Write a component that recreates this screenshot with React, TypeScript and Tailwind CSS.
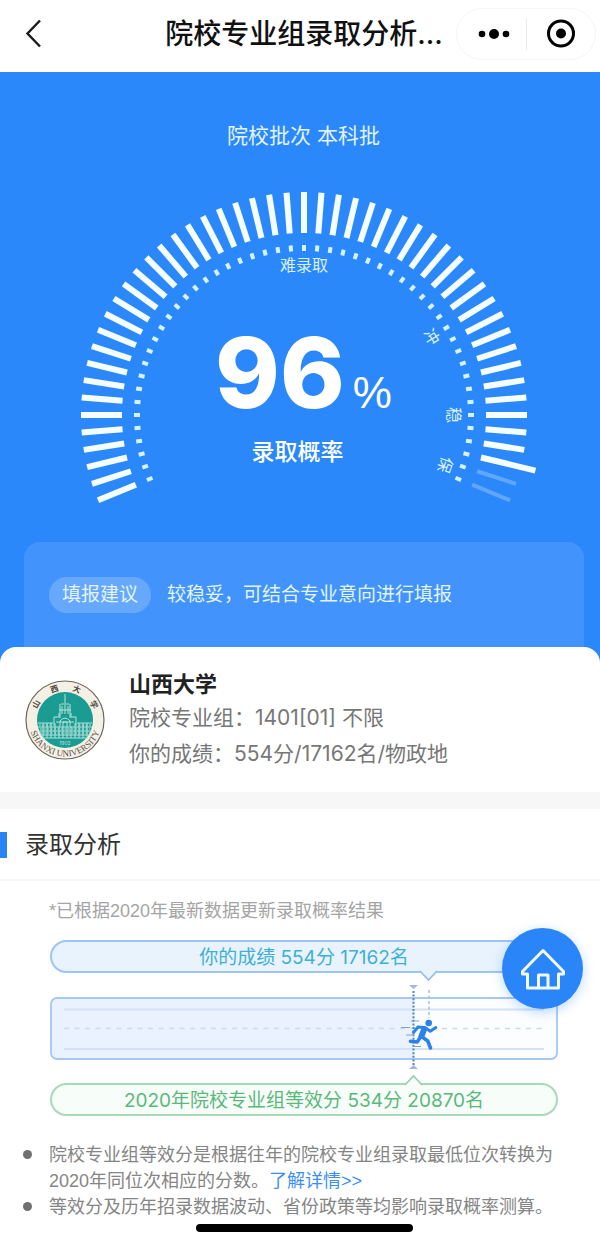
import React from 'react';

const STEP = 4.5;
const TICKS = Array.from({ length: 51 }, (_, i) => -112.5 + i * STEP);
const POINTER = 48;

function Header() {
  return (
    <header className="flex h-[72px] items-center bg-white pb-1">
      <div className="w-[152px] shrink-0 pl-[22px]">
        <button type="button" aria-label="返回" className="block">
          <svg width="24" height="30" viewBox="0 0 24 30" fill="none" stroke="#1a1a1a" strokeWidth="2.4">
            <path d="M18 1.500 5.500 14.500 18 27.500" />
          </svg>
        </button>
      </div>
      <h1 className="min-w-0 flex-1 text-center text-[28px] leading-10 font-medium whitespace-nowrap text-[#111]">
        院校专业组录取分析...
      </h1>
      <div className="mr-1 flex h-[52px] w-[140px] shrink-0 items-center rounded-full border border-[#f5f5f5]">
        <button type="button" aria-label="更多" className="flex h-full w-1/2 items-center justify-center pl-1">
          <svg width="34" height="12" viewBox="0 0 34 12" fill="#000">
            <circle cx="5" cy="6" r="3.300" />
            <circle cx="17" cy="6" r="5" />
            <circle cx="29" cy="6" r="3.300" />
          </svg>
        </button>
        <span className="h-8 w-px bg-[#eaeaea]" />
        <button type="button" aria-label="关闭" className="flex h-full flex-1 items-center justify-center">
          <svg width="30" height="30" viewBox="0 0 30 30" fill="none">
            <circle cx="15" cy="14.500" r="12.500" stroke="#000" strokeWidth="3" />
            <circle cx="15" cy="14.500" r="5" fill="#000" />
          </svg>
        </button>
      </div>
    </header>
  );
}

function DialLabel({ angle, children }: { angle: number; children: string }) {
  return (
    <text
      x="240"
      y="86"
      textAnchor="middle"
      fontSize="16"
      fill="#d9f0ff"
      transform={`rotate(${angle} 240 230)`}
    >
      {children}
    </text>
  );
}

function Gauge() {
  return (
    <div className="grid justify-items-center">
      <svg viewBox="0 0 480 325" className="col-start-1 row-start-1 w-[480px] max-w-full overflow-visible">
        {TICKS.map((a, i) => (
          <g key={a} transform={`rotate(${a} 240 230)`}>
            <rect
              x={i > POINTER ? 238 : 237}
              y={i === POINTER ? -8 : 7}
              width={i > POINTER ? 4 : 6}
              height={i === POINTER ? 56 : 41}
              fill={i > POINTER ? '#5fa6fc' : '#f4fdff'}
            />
            <rect x="238" y="60" width="4" height="6" fill="#d5f3ff" />
          </g>
        ))}
        <DialLabel angle={0}>难录取</DialLabel>
        <DialLabel angle={58.5}>冲</DialLabel>
        <DialLabel angle={90}>稳</DialLabel>
        <DialLabel angle={109.5}>保</DialLabel>
      </svg>
      <div className="col-start-1 row-start-1 pt-[138px] text-center text-white">
        <div className="flex h-[100px] items-baseline justify-center gap-2 leading-[100px]">
          <span className="text-[98px] font-extrabold">96</span>
          <span className="font-['Liberation_Sans',sans-serif] text-[44px]">%</span>
        </div>
        <div className="mt-3 pr-3 text-[23px] leading-[34px] font-medium">录取概率</div>
      </div>
    </div>
  );
}

function Badge() {
  return (
    <svg viewBox="0 0 80 80" className="size-20 shrink-0" role="img" aria-label="山西大学">
      <defs>
        <path id="rim" d="M3.500 40a36.500 36.500 0 0 0 73 0" />
      </defs>
      <circle cx="40" cy="40" r="39" fill="#f5f0e6" stroke="#6d655c" strokeWidth="1.200" />
      <circle cx="40" cy="40" r="28" fill="#1b9c93" />
      <g fill="none" stroke="#b5e3dc" strokeWidth="1">
        <path d="M40 14v9M36 24h8M35 24v14M45 24v14M34 30h12M37 26v8M40 25v9M43 26v8" />
        <path d="M29 42v-5h5v-4M51 42v-5h-5v-4M31 42h18M35 46v-5q5-6 10 0v5M38 46v-4h4v4" />
        <path d="M13 43h17v15M67 43H50v15M13 47h54M13.500 51h53M15 55h50M17 58h46" />
        <path d="M14 45h16M50 45h16M15 49h50M15 53h50" strokeDasharray="2 1.500" />
        <path d="M18 43v14M22 43v15M26 43v15M34 46v12M38 46v12M42 46v12M46 46v12M54 43v15M58 43v15M62 43v14" />
      </g>
      <text x="40" y="65" textAnchor="middle" fontSize="5" fill="#b5e3dc">1902</text>
      <g fill="#4f4841" fontSize="8" fontWeight="700" textAnchor="middle">
        <text x="40" y="10" transform="rotate(-61 40 40)">山</text>
        <text x="40" y="10" transform="rotate(-19 40 40)">西</text>
        <text x="40" y="10" transform="rotate(21 40 40)">大</text>
        <text x="40" y="10" transform="rotate(62 40 40)">学</text>
      </g>
      <text fontSize="9" fill="#5b5249" fontFamily="Liberation Serif, serif" textAnchor="middle">
        <textPath href="#rim" startOffset="50%">SHANXI UNIVERSITY</textPath>
      </text>
    </svg>
  );
}

function Track() {
  return (
    <svg viewBox="0 0 508 110" className="relative block w-full overflow-visible" fill="none">
      <rect x="1" y="25" width="506" height="61" rx="6" fill="#fcfdff" />
      <path d="M364 25H7a6 6 0 0 0-6 6v49a6 6 0 0 0 6 6h357z" fill="#e9f2fe" />
      <rect x="1" y="25" width="506" height="61" rx="6" stroke="#a5c8f4" strokeWidth="1.800" />
      <path d="M14 36.500h480M14 76h480" stroke="#d3e2f6" strokeWidth="1.800" />
      <path d="M14 55.500h480" stroke="#d0dae8" strokeWidth="1.600" strokeDasharray="5 5.500" />
      <path d="M379 17v28" stroke="#a9bdd8" strokeWidth="1.500" strokeDasharray="3 2.500" />
      <path d="M363.500 18v74" stroke="#4b86cc" strokeWidth="2" strokeDasharray="2 1.600" />
      <path d="M359 12h9l-4.500 4zM359 96h9l-4.500-4z" fill="#9dbbe0" />
      <path d="M370-2l8.500 9L387-2" fill="#e9f3fe" stroke="#8fbdf0" strokeWidth="1.600" />
      <path d="M355 112l8.500-9 8.500 9" fill="#f7fdf9" stroke="#93d1aa" strokeWidth="1.600" />
      <g stroke="#7fa4d2" strokeWidth="1.200">
        <path d="M361 48h8M351 54.500h9M356 62h8M363 73.500h8" />
      </g>
      <circle cx="378.700" cy="50" r="3.300" fill="#2b82ea" />
      <g stroke="#2b82ea" strokeLinecap="round" strokeLinejoin="round">
        <path d="M374.300 56L371.500 63" strokeWidth="6" />
        <path d="M375.500 55l4.800 3.200 5.500-3.700M374 54.500l-6-.5-4.500 5.500" strokeWidth="3" />
        <path d="M371.500 63.500l6.300 4.500 2.700 7M370.500 64l-3.300 5-6.700-.8" strokeWidth="3.600" />
      </g>
    </svg>
  );
}

export default function App() {
  return (
    <div className="relative flow-root bg-white font-[Inter,'Noto_Sans_CJK_SC',sans-serif]">
      <Header />
      <main>
        <section className="bg-[#2a88fb] pb-4">
          <div className="pt-12 pl-[7px]">
            <p className="text-center text-[21px] leading-8 text-[#e3f4ff]">院校批次 本科批</p>
            <div className="pt-[33px]">
              <Gauge />
            </div>
          </div>
          <div className="mt-8 mr-4 -mb-4 ml-6 flex h-[121px] items-start gap-4 rounded-t-2xl bg-[#4294fc] px-[25px] pt-[35px] text-[19px] leading-9 text-[#e3f4ff]">
            <span className="shrink-0 rounded-full bg-[#65a8fc] px-[13px]">填报建议</span>
            <p>较稳妥，可结合专业意向进行填报</p>
          </div>
        </section>

        <section className="relative -mt-4 flex h-[145px] items-start gap-6 rounded-t-2xl bg-white px-[25px] pt-[21px]">
          <div className="pt-3">
            <Badge />
          </div>
          <div className="text-[21px] leading-9 text-[#777]">
            <h2 className="text-[22px] leading-8 font-bold text-[#222]">山西大学</h2>
            <p>院校专业组：1401[01] 不限</p>
            <p>你的成绩：554分/17162名/物政地</p>
          </div>
        </section>

        <div className="h-[17px] bg-[#f7f7f7]" />

        <section>
          <div className="flex h-[72px] items-center gap-[18px] border-b-2 border-[#f6f6f6] pt-0.5">
            <span className="h-[26px] w-[7px] bg-[#2a84f6]" />
            <h2 className="text-[24px] leading-9 text-[#333]">录取分析</h2>
          </div>
          <div className="pt-[17px] pr-[42px] pl-[50px]">
            <p className="-ml-px font-['Liberation_Sans','Noto_Sans_CJK_SC',sans-serif] text-[18px] leading-[26px] text-[#a5a5a5]">
              *已根据2020年最新数据更新录取概率结果
            </p>
            <div className="mt-4 h-[33px] rounded-full border-2 border-[#9dc5f3] bg-[#e9f3fe] text-center text-[19px] leading-[31px] text-[#3fb0d6]">
              你的成绩 554分 17162名
            </div>
            <Track />
            <div className="h-[33px] rounded-full border-2 border-[#a6dab8] bg-[#f7fdf9] text-center text-[19px] leading-[31px] text-[#5bb87c]">
              2020年院校专业组等效分 534分 20870名
            </div>
          </div>
          <ul className="mt-[26px] mr-10 ml-[49px] list-none font-['Liberation_Sans','Noto_Sans_CJK_SC',sans-serif] text-[18px] leading-[26px] text-[#858585]">
            <li className="relative">
              <span className="absolute top-2 -left-[26px] size-[9px] rounded-full bg-[#707070]" />
              院校专业组等效分是根据往年的院校专业组录取最低位次转换为2020年同位次相应的分数。
              <a href="#detail" className="text-[#3c8ff0]">了解详情&gt;&gt;</a>
            </li>
            <li className="relative">
              <span className="absolute top-2 -left-[26px] size-[9px] rounded-full bg-[#707070]" />
              等效分及历年招录数据波动、省份政策等均影响录取概率测算。
            </li>
          </ul>
        </section>
      </main>
      <div className="mt-1 mb-[14px] flex justify-center pl-2">
        <span className="h-2 w-[217px] rounded-full bg-black" />
      </div>

      <button
        type="button"
        aria-label="首页"
        className="absolute right-[17px] bottom-[237px] flex size-[81px] items-center justify-center rounded-full bg-[#2a86f8] shadow-[0_3px_12px_rgba(42,134,248,0.3)]"
      >
        <svg width="46" height="42" viewBox="0 0 46 42" fill="none" stroke="#f2faff" strokeWidth="3" strokeLinejoin="round">
          <path d="M23 2.500L2.500 23.500v2.500h5v14h31V26h5v-2.500z" />
          <path d="M18.500 40V27h9.500v13" />
        </svg>
      </button>
    </div>
  );
}
